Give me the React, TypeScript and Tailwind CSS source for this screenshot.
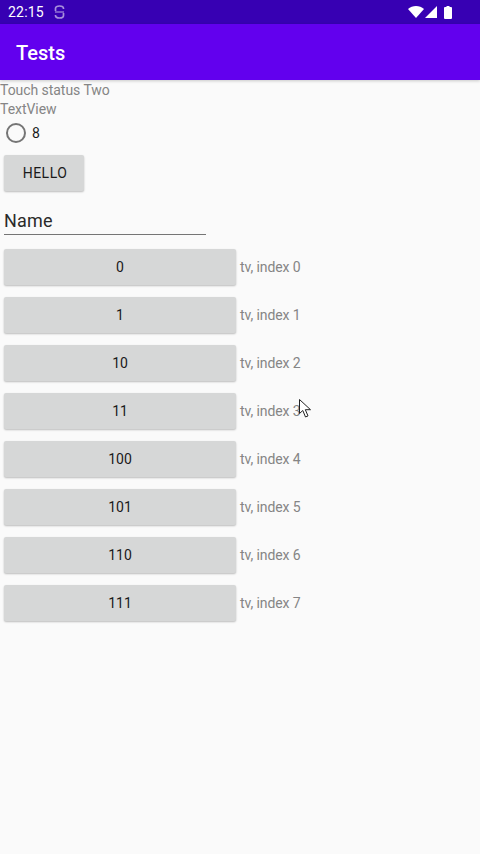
import type { ReactNode } from "react";

const rows = ["0", "1", "10", "11", "100", "101", "110", "111"];

function StatusBar() {
  return (
    <div className="h-6 bg-[#3700b3] flex items-center pl-2 pr-[28px] text-white">
      <span className="text-sm leading-5 tracking-[0.2px]">22:15</span>
      <svg className="ml-[10px]" width="11" height="14" viewBox="0 0 11 14" fill="none" stroke="#a78fdc" strokeWidth="1.700">
        <path d="M1.500 6V3.500C1.500 2 3 1 5.500 1s4 1 4 2.500V4" />
        <path d="M9.500 8v2.500C9.500 12 8 13 5.500 13s-4-1-4-2.500V10" />
        <path d="M1 7h9" strokeWidth="1.200" />
      </svg>
      <div className="ml-auto flex items-center">
        <svg width="16" height="12" viewBox="0 0 16 12" fill="#fff">
          <path d="M0 3C2.200 1.100 5 0 8 0s5.800 1.100 8 3l-8 9z" />
        </svg>
        <svg className="ml-[1px]" width="12" height="12" viewBox="0 0 12 12" fill="#fff">
          <path d="M12 0v12H0z" />
        </svg>
        <svg className="ml-[7px]" width="8" height="13" viewBox="0 0 8 13" fill="#fff">
          <path d="M2.500 0h3v1H7a1 1 0 0 1 1 1v10a1 1 0 0 1-1 1H1a1 1 0 0 1-1-1V2a1 1 0 0 1 1-1h1.500z" />
        </svg>
      </div>
    </div>
  );
}

function RaisedButton({ className, children }: { className: string; children: ReactNode }) {
  return (
    <div className={`h-9 bg-[#d6d7d7] rounded-[2px] shadow-[0_1px_2px_rgba(0,0,0,0.25)] flex items-center justify-center text-sm text-[#1a1a1a] ${className}`}>
      {children}
    </div>
  );
}

export default function App() {
  return (
    <div className="relative w-[480px] h-[854px] overflow-hidden bg-[#fafafa] font-['Roboto',sans-serif]">
      <StatusBar />
      <div className="h-14 bg-[#6200ee] flex items-center pl-4 pt-[2px] shadow-[0_1px_3px_rgba(0,0,0,0.2)]">
        <h1 className="text-xl font-medium text-white">Tests</h1>
      </div>

      <div className="text-sm leading-[19px] text-[#858585] tracking-[-0.05px]">
        <p className="mt-[1px]">Touch status Two</p>
        <p>TextView</p>
      </div>

      <div className="flex items-center h-6 mt-[2px] pl-[6px]">
        <div className="w-5 h-5 rounded-full border-2 border-[#757575]" />
        <span className="ml-[6px] text-sm text-[#1a1a1a]">8</span>
      </div>

      <RaisedButton className="w-[80px] ml-1 mt-[10px] pl-[2px] tracking-[0.5px]">HELLO</RaisedButton>

      <div className="ml-1 w-[202px] mt-[15px] h-[29px] border-b border-[#757575] text-lg leading-[29px] tracking-[0.2px] text-[#2a2a2a]">
        Name
      </div>

      <div className="mt-[14px] flex flex-col gap-3">
        {rows.map((label, i) => (
          <div key={label} className="flex items-center">
            <RaisedButton className="w-[232px] ml-1">{label}</RaisedButton>
            <span className="ml-1 text-sm text-[#858585] tracking-[-0.1px]">tv, index {i}</span>
          </div>
        ))}
      </div>

      {/* mouse pointer sits over the list */}
      <svg className="absolute left-[299px] top-[399px]" width="13" height="20" viewBox="0 0 13 20" fill="#fff" stroke="#222" strokeWidth="1">
        <path d="M.5.500v14l3.300-3 2.700 6.500 2.500-1.100-2.700-6.200h5.200z" />
      </svg>
    </div>
  );
}
